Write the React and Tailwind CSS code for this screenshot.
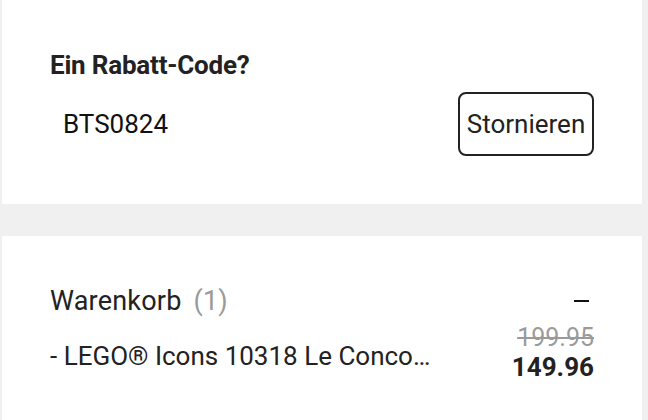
import React from 'react';

const App = () => {
  return (
    <div className="w-[648px] h-[420px] overflow-hidden bg-[#f0f0f0] font-['Roboto',sans-serif] text-[#222222]">
      {/* Rabatt-Code */}
      <div className="ml-[2px] w-[640px] h-[204px] bg-white px-[48px] pt-[50px]">
        <h2 className="text-[26px] leading-[30px] font-bold tracking-[-0.2px]">Ein Rabatt-Code?</h2>
        <div className="mt-[12px] flex items-center justify-between">
          <span className="pl-[13px] text-[26px] text-[#111111]">BTS0824</span>
          <button className="h-[64px] w-[136px] rounded-[8px] border-2 border-[#222222] text-[26px] text-[#222222]">
            Stornieren
          </button>
        </div>
      </div>

      <div className="h-[32px]" />

      {/* Warenkorb */}
      <div className="ml-[2px] w-[640px] h-[200px] bg-white px-[48px] pt-[50px]">
        <div className="flex items-center justify-between">
          <div className="text-[27px] leading-[30px] tracking-[0.2px]">
            Warenkorb<span className="ml-[12px] text-[#9a9a9a]">(1)</span>
          </div>
          <div className="mr-[5px] h-[2px] w-[15px] bg-[#111111]" />
        </div>
        <div className="mt-[8px] flex items-center justify-between">
          <span className="pt-[6px] text-[26px] leading-[30px] whitespace-nowrap">- LEGO® Icons 10318 Le Conco…</span>
          <div className="flex flex-col items-end">
            <span className="text-[25px] leading-[28px] text-[#9a9a9a] line-through">199.95</span>
            <span className="text-[26px] leading-[30px] font-bold">149.96</span>
          </div>
        </div>
      </div>
    </div>
  );
};

export default App;
